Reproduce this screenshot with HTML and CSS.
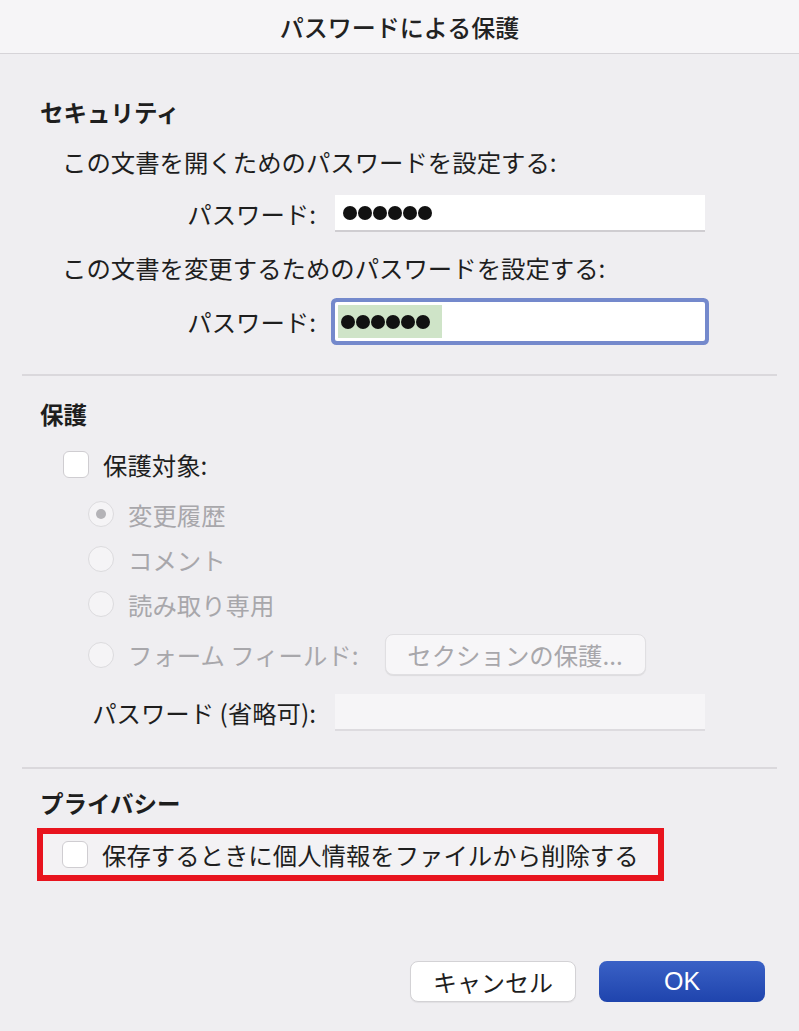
FILE: index.html
```html
<!DOCTYPE html>
<html lang="ja">

<head>
    <meta charset="UTF-8">
    <meta name="viewport" content="width=device-width, initial-scale=1.0">
    <title>パスワードによる保護</title>
    <link rel="stylesheet" href="styles.css">
</head>

<body>
    <div class="dialog">
        <!-- タイトルバー -->
        <div class="titlebar">パスワードによる保護</div>

        <!-- セキュリティ -->
        <div class="section security">
            <h2 class="head">セキュリティ</h2>
            <p class="line">この文書を開くためのパスワードを設定する:</p>
            <div class="field row1">
                <label class="label">パスワード:</label>
                <div class="input">
                    <span class="dots"><i></i><i></i><i></i><i></i><i></i><i></i></span>
                </div>
            </div>
            <p class="line line2">この文書を変更するためのパスワードを設定する:</p>
            <div class="field row2">
                <label class="label">パスワード:</label>
                <div class="input focus">
                    <span class="dots selected"><i></i><i></i><i></i><i></i><i></i><i></i></span>
                </div>
            </div>
        </div>

        <hr class="divider first">

        <!-- 保護 -->
        <div class="section protect">
            <h2 class="head">保護</h2>
            <div class="check_row">
                <span class="checkbox"></span>
                <span>保護対象:</span>
            </div>
            <div class="radio_list">
                <div class="radio_row">
                    <span class="radio on"></span>
                    <span>変更履歴</span>
                </div>
                <div class="radio_row">
                    <span class="radio"></span>
                    <span>コメント</span>
                </div>
                <div class="radio_row">
                    <span class="radio"></span>
                    <span>読み取り専用</span>
                </div>
                <div class="radio_row form_row">
                    <span class="radio"></span>
                    <span>フォーム フィールド:</span>
                    <span class="btn_section">セクションの保護...</span>
                </div>
            </div>
            <div class="field row3">
                <label class="label">パスワード (省略可):</label>
                <div class="input empty"></div>
            </div>
        </div>

        <hr class="divider second">

        <!-- プライバシー -->
        <div class="section privacy">
            <h2 class="head">プライバシー</h2>
            <div class="mark">
                <span class="checkbox"></span>
                <span>保存するときに個人情報をファイルから削除する</span>
            </div>
        </div>

        <!-- ボタン -->
        <div class="buttons">
            <span class="btn cancel">キャンセル</span>
            <span class="btn ok">OK</span>
        </div>
    </div>
</body>

</html>
```

FILE: styles.css
```css
* {
    margin: 0;
    padding: 0;
    box-sizing: border-box;
}

body {
    background: #efeef1;
    font-family: "Noto Sans CJK JP", "Liberation Sans", sans-serif;
    color: #1e1e1e;
    font-size: 24.4px;
}

.dialog {
    width: 799px;
    height: 1031px;
}

.titlebar {
    height: 54px;
    background: #f6f5f7;
    border-bottom: 1px solid #d6d4d8;
    display: flex;
    align-items: center;
    justify-content: center;
    font-size: 24px;
    font-weight: 500;
    color: #222222;
}

.section {
    padding: 0 40px;
}

.head {
    font-size: 23.5px;
    font-weight: 700;
    height: 30px;
    line-height: 30px;
}

.security {
    padding-top: 43px;
}

.line {
    height: 30px;
    line-height: 30px;
    margin-top: 20px;
    padding-left: 22px;
}

.line2 {
    margin-top: 21px;
}

.field {
    display: flex;
    align-items: center;
    margin-left: -40px;
}

.field .label {
    width: 316px;
    text-align: right;
    white-space: nowrap;
}

.field .input {
    width: 370px;
    height: 37px;
    margin-left: 19px;
    background: #ffffff;
    border-bottom: 2px solid #cfcdd1;
    display: flex;
    align-items: center;
    padding-left: 4px;
}

.row1 {
    margin-top: 18px;
}

.row2 {
    margin-top: 19px;
    height: 39px;
}

.field .input.focus {
    height: 39px;
    border: none;
    box-shadow: 0 0 0 4px #7489cc;
    border-radius: 2px;
    padding-left: 3px;
}

.dots {
    display: flex;
    gap: 1px;
    padding: 0 4px;
    height: 33px;
    align-items: center;
}

.dots i {
    width: 14px;
    height: 14px;
    border-radius: 50%;
    background: #111111;
}

.dots.selected {
    background: #cfe4c8;
    padding: 0 12px 0 3px;
}

.divider {
    border: none;
    height: 2px;
    background: #dad8dc;
    margin: 0 22px;
}

.divider.first {
    margin-top: 33px;
}

.protect {
    padding-top: 23px;
}

.check_row {
    display: flex;
    align-items: center;
    gap: 14px;
    height: 30px;
    margin-top: 20px;
    padding-left: 23px;
}

.checkbox {
    width: 26px;
    height: 27px;
    background: #ffffff;
    border: 1px solid #cfcdd1;
    border-radius: 6px;
    flex-shrink: 0;
}

.radio_list {
    padding-left: 48px;
    color: #a8a7ab;
    margin-top: 20px;
}

.radio_row {
    display: flex;
    align-items: center;
    gap: 14px;
    height: 30px;
    margin-bottom: 15px;
}

.radio {
    width: 26px;
    height: 26px;
    border-radius: 50%;
    background: #f5f4f6;
    border: 1px solid #dcdbde;
    display: flex;
    align-items: center;
    justify-content: center;
}

.radio.on::after {
    content: "";
    width: 10px;
    height: 10px;
    border-radius: 50%;
    background: #b4b3b7;
}

.form_row {
    height: 41px;
    margin-top: 1px;
    margin-bottom: 0;
}

.btn_section {
    margin-left: 12px;
    width: 261px;
    height: 41px;
    background: #f7f6f8;
    border: 1px solid #e0dfe2;
    border-radius: 8px;
    box-shadow: 0 1px 1px rgba(0, 0, 0, 0.08);
    display: flex;
    align-items: center;
    justify-content: center;
}

.row3 {
    margin-top: 19px;
}

.field .input.empty {
    background: #f6f5f7;
    border-bottom: 2px solid #dddbdf;
}

.divider.second {
    margin-top: 36px;
}

.privacy {
    padding-top: 19px;
}

.mark {
    margin-top: 10px;
    margin-left: -3px;
    width: 627px;
    height: 53px;
    border: 6px solid #e8141e;
    background: #f3f2f4;
    display: flex;
    align-items: center;
    gap: 14px;
    padding-left: 19px;
}

.buttons {
    display: flex;
    justify-content: flex-end;
    gap: 23px;
    padding-right: 34px;
    margin-top: 80px;
}

.btn {
    width: 166px;
    height: 41px;
    border-radius: 8px;
    display: flex;
    align-items: center;
    justify-content: center;
    font-size: 24px;
}

.btn.cancel {
    background: #ffffff;
    border: 1px solid #d3d2d5;
    box-shadow: 0 1px 1px rgba(0, 0, 0, 0.06);
}

.btn.ok {
    background: linear-gradient(#3a61c6, #1f44ad);
    color: #ffffff;
    font-family: "Liberation Sans", sans-serif;
    font-size: 25px;
}
```
